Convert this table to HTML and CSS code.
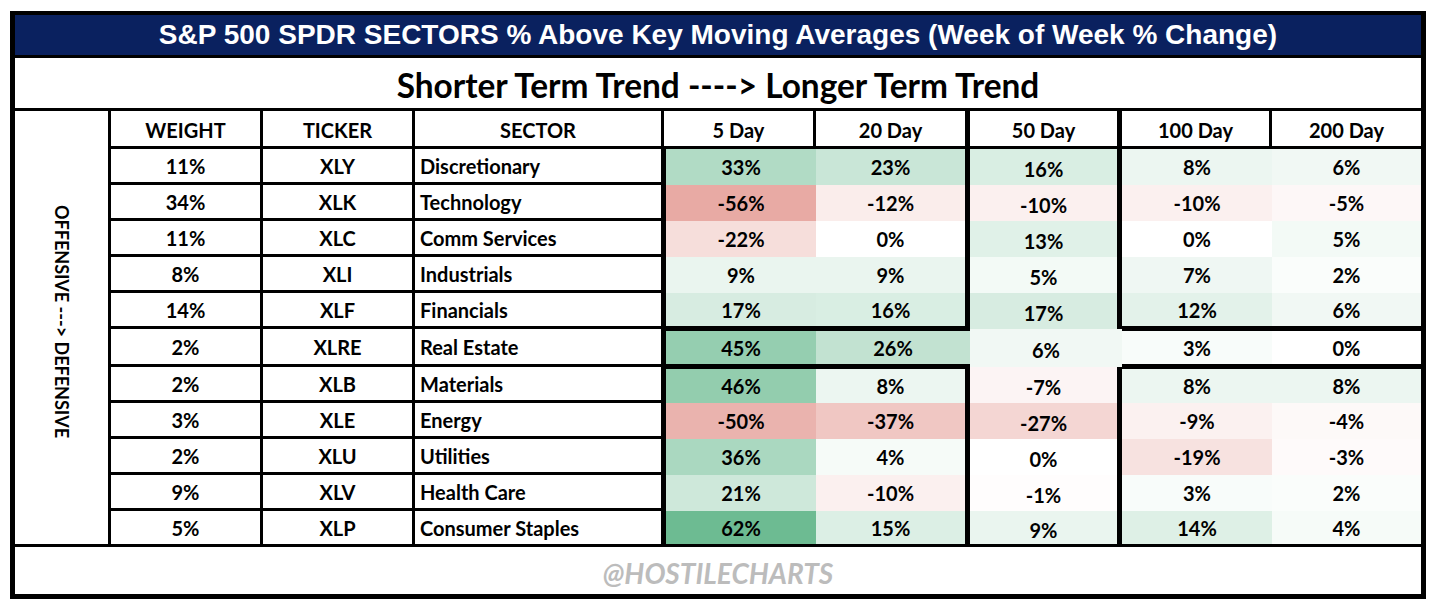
FILE: index.html
```html
<!DOCTYPE html>
<html lang="en">
<head>
<meta charset="utf-8">
<title>S&amp;P 500 SPDR Sectors</title>
<link rel="stylesheet" href="styles.css">
</head>
<body>
<div class="frame">
  <div class="title">S&amp;P 500 SPDR SECTORS % Above Key Moving Averages (Week of Week % Change)</div>
  <div class="subtitle">Shorter Term Trend ----&gt; Longer Term Trend</div>
  <div class="grid">
    <div class="label"><span>OFFENSIVE ---&gt; DEFENSIVE</span></div>

    <div class="c hd">WEIGHT</div>
    <div class="c hd">TICKER</div>
    <div class="c hd">SECTOR</div>
    <div class="c hd">5 Day</div>
    <div class="c hd thick">20 Day</div>
    <div class="c hd thick">50 Day</div>
    <div class="c hd">100 Day</div>
    <div class="c hd last">200 Day</div>

    <!-- XLY -->
    <div class="c fx">11%</div><div class="c fx">XLY</div><div class="c fx sec">Discretionary</div>
    <div class="c d5" style="background:#b1dbc5">33%</div>
    <div class="c d20" style="background:#c9e6d7">23%</div>
    <div class="c d50 edge" style="background:#d9eee3">16%</div>
    <div class="c dv" style="background:#ecf6f1">8%</div>
    <div class="c dv" style="background:#f1f8f4">6%</div>

    <!-- XLK -->
    <div class="c fx">34%</div><div class="c fx">XLK</div><div class="c fx sec">Technology</div>
    <div class="c d5" style="background:#e8aaa4">-56%</div>
    <div class="c d20" style="background:#faedeb">-12%</div>
    <div class="c d50 edge" style="background:#fbf0ef">-10%</div>
    <div class="c dv" style="background:#fbf0ef">-10%</div>
    <div class="c dv" style="background:#fdf7f7">-5%</div>

    <!-- XLC -->
    <div class="c fx">11%</div><div class="c fx">XLC</div><div class="c fx sec">Comm Services</div>
    <div class="c d5" style="background:#f6dedb">-22%</div>
    <div class="c d20" style="background:#ffffff">0%</div>
    <div class="c d50 edge" style="background:#e0f1e8">13%</div>
    <div class="c dv" style="background:#ffffff">0%</div>
    <div class="c dv" style="background:#f3faf6">5%</div>

    <!-- XLI -->
    <div class="c fx">8%</div><div class="c fx">XLI</div><div class="c fx sec">Industrials</div>
    <div class="c d5" style="background:#eaf5ef">9%</div>
    <div class="c d20" style="background:#eaf5ef">9%</div>
    <div class="c d50 edge" style="background:#f3faf6">5%</div>
    <div class="c dv" style="background:#eff7f3">7%</div>
    <div class="c dv" style="background:#fafdfb">2%</div>

    <!-- XLF -->
    <div class="c fx">14%</div><div class="c fx">XLF</div><div class="c fx sec">Financials</div>
    <div class="c d5 bb" style="background:#d7ece1">17%</div>
    <div class="c d20 bb" style="background:#d9eee3">16%</div>
    <div class="c d50 edge" style="background:#d7ece1">17%</div>
    <div class="c dv bb" style="background:#e3f2ea">12%</div>
    <div class="c dv bb" style="background:#f1f8f4">6%</div>

    <!-- XLRE -->
    <div class="c fx">2%</div><div class="c fx">XLRE</div><div class="c fx sec">Real Estate</div>
    <div class="c d5 mid" style="background:#95ceb0">45%</div>
    <div class="c dv mid" style="background:#c2e2d1">26%</div>
    <div class="c d50" style="background:#f1f8f4">6%</div>
    <div class="c dv mid" style="background:#f8fcfa">3%</div>
    <div class="c dv mid" style="background:#ffffff">0%</div>

    <!-- XLB -->
    <div class="c fx">2%</div><div class="c fx">XLB</div><div class="c fx sec">Materials</div>
    <div class="c d5 bt" style="background:#93cdae">46%</div>
    <div class="c d20 bt" style="background:#ecf6f1">8%</div>
    <div class="c d50 edge" style="background:#fcf4f4">-7%</div>
    <div class="c dv bt" style="background:#ecf6f1">8%</div>
    <div class="c dv bt" style="background:#ecf6f1">8%</div>

    <!-- XLE -->
    <div class="c fx">3%</div><div class="c fx">XLE</div><div class="c fx sec">Energy</div>
    <div class="c d5" style="background:#eab3ae">-50%</div>
    <div class="c d20" style="background:#f0c7c3">-37%</div>
    <div class="c d50 edge" style="background:#f4d6d3">-27%</div>
    <div class="c dv" style="background:#fbf1f0">-9%</div>
    <div class="c dv" style="background:#fdf9f8">-4%</div>

    <!-- XLU -->
    <div class="c fx">2%</div><div class="c fx">XLU</div><div class="c fx sec">Utilities</div>
    <div class="c d5" style="background:#aad8c0">36%</div>
    <div class="c d20" style="background:#f6fbf8">4%</div>
    <div class="c d50 edge" style="background:#ffffff">0%</div>
    <div class="c dv" style="background:#f7e2e0">-19%</div>
    <div class="c dv" style="background:#fefafa">-3%</div>

    <!-- XLV -->
    <div class="c fx">9%</div><div class="c fx">XLV</div><div class="c fx sec">Health Care</div>
    <div class="c d5" style="background:#cee8da">21%</div>
    <div class="c d20" style="background:#fbf0ef">-10%</div>
    <div class="c d50 edge" style="background:#fffdfd">-1%</div>
    <div class="c dv" style="background:#f8fcfa">3%</div>
    <div class="c dv" style="background:#fafdfb">2%</div>

    <!-- XLP -->
    <div class="c fx">5%</div><div class="c fx">XLP</div><div class="c fx sec">Consumer Staples</div>
    <div class="c d5 bb" style="background:#6dbb92">62%</div>
    <div class="c d20 bb" style="background:#dcefe5">15%</div>
    <div class="c d50 edge bb" style="background:#eaf5ef">9%</div>
    <div class="c dv bb" style="background:#def0e6">14%</div>
    <div class="c dv bb" style="background:#f6fbf8">4%</div>
  </div>
  <div class="footer">@HOSTILECHARTS</div>
</div>
</body>
</html>
```

FILE: styles.css
```css
* { box-sizing: border-box; }

html, body {
  margin: 0;
  padding: 0;
  background: #ffffff;
}

.frame {
  margin: 11px 0 0 10px;
  width: 1416px;
  border: 5px solid #000;
  border-top-width: 4px;
  background: #fff;
}

.title {
  height: 43px;
  background: #0a215f;
  border-bottom: 3px solid #000;
  color: #fff;
  font-family: "Liberation Sans", Arial, sans-serif;
  font-weight: bold;
  font-size: 28px;
  line-height: 40px;
  text-align: center;
}

.subtitle {
  height: 53px;
  border-bottom: 3px solid #000;
  color: #000;
  font-family: Lato, "Open Sans", sans-serif;
  font-weight: bold;
  font-size: 33.4px;
  line-height: 50px;
  padding-top: 2px;
  text-align: center;
}

.grid {
  display: grid;
  grid-template-columns: 96px 152px 152px 249px 152px 154px 152px 150px 149px;
  grid-template-rows: 38px 36px 36px 36px 36px 36px 38px 36px 36px 36px 36px 36px;
  font-family: Lato, "Open Sans", sans-serif;
  font-weight: bold;
  font-size: 20px;
  color: #000;
}

.label {
  grid-column: 1;
  grid-row: 1 / span 12;
  border-right: 3px solid #000;
  border-bottom: 3px solid #000;
  display: flex;
  align-items: center;
  justify-content: center;
  padding-bottom: 12px;
}

.label span {
  writing-mode: vertical-rl;
  font-size: 18px;
  white-space: nowrap;
}

.c {
  display: flex;
  align-items: center;
  justify-content: center;
  white-space: nowrap;
}

.hd {
  border-right: 3px solid #000;
  border-bottom: 3px solid #000;
  padding-top: 3px;
}

.hd.thick { border-right-width: 5px; }
.hd.last { border-right: 0; }

.fx {
  border-right: 3px solid #000;
  border-bottom: 3px solid #000;
}

.sec {
  justify-content: flex-start;
  padding-left: 5px;
}

.d5 { border-left: 2px solid #000; }
.d20 { border-right: 5px solid #000; }
.d50 { padding-top: 4px; }
.d50.edge { border-right: 5px solid #000; }

.bb { border-bottom: 3px solid #000; }
.bt { border-top: 2px solid #000; }
.mid {
  border-top: 2px solid #000;
  border-bottom: 3px solid #000;
}

.footer {
  height: 47px;
  display: flex;
  align-items: center;
  justify-content: center;
  padding-top: 5px;
  font-family: Lato, "Open Sans", sans-serif;
  font-weight: bold;
  font-style: italic;
  font-size: 28px;
  color: #bcbcbc;
}
```
